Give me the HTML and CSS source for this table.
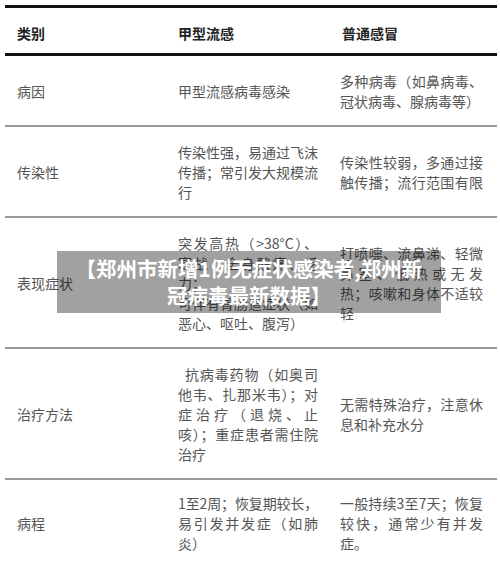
FILE: index.html
```html
<!DOCTYPE html>
<html lang="zh">
<head>
<meta charset="utf-8">
<title>甲型流感与普通感冒</title>
<link rel="stylesheet" href="styles.css">
</head>
<body>
<div class="page">
  <div class="table">
    <div class="row head">
      <div class="c1">类别</div>
      <div class="c2">甲型流感</div>
      <div class="c3">普通感冒</div>
    </div>
    <div class="row r1">
      <div class="c1">病因</div>
      <div class="c2"><div>甲型流感病毒感染</div></div>
      <div class="c3"><div class="j">多种病毒（如鼻病毒、</div><div>冠状病毒、腺病毒等）</div></div>
    </div>
    <div class="row r2">
      <div class="c1">传染性</div>
      <div class="c2"><div class="j">传染性强，易通过飞沫</div><div class="j">传播；常引发大规模流</div><div>行</div></div>
      <div class="c3"><div class="j">传染性较弱，多通过接</div><div class="j">触传播；流行范围有限</div></div>
    </div>
    <div class="row r3">
      <div class="c1">表现症状</div>
      <div class="c2"><div class="j">突发高热（&gt;38°C）、</div><div class="j">寒战、全身酸痛、乏</div><div>力；</div><div class="j">可伴有胃肠道症状（如</div><div>恶心、呕吐、腹泻）</div></div>
      <div class="c3"><div class="j">打喷嚏、流鼻涕、轻微</div><div class="j">鼻塞、低热或无发</div><div class="j">热；咳嗽和身体不适较</div><div>轻</div></div>
    </div>
    <div class="row r4">
      <div class="c1">治疗方法</div>
      <div class="c2"><div class="j ind">抗病毒药物（如奥司</div><div class="j">他韦、扎那米韦）；对</div><div class="j">症治疗（退烧、止</div><div class="j">咳）；重症患者需住院</div><div>治疗</div></div>
      <div class="c3"><div class="j">无需特殊治疗，注意休</div><div>息和补充水分</div></div>
    </div>
    <div class="row r5">
      <div class="c1">病程</div>
      <div class="c2"><div class="j tight">1至2周；恢复期较长，</div><div class="j">易引发并发症（如肺</div><div>炎）</div></div>
      <div class="c3"><div class="j">一般持续3至7天；恢复</div><div class="j">较快，通常少有并发</div><div>症。</div></div>
    </div>
  </div>
  <div class="banner">【郑州市新增1例无症状感染者,郑州新<br>冠病毒最新数据】</div>
</div>
</body>
</html>
```
FILE: styles.css
```css
html, body {
  margin: 0;
  padding: 0;
  background: #fff;
}
body {
  font-family: "Noto Sans CJK SC", "Noto Sans", sans-serif;
  font-size: 14px;
  line-height: 20px;
  color: #555;
}
.page {
  position: relative;
  width: 500px;
  height: 566px;
  overflow: hidden;
}
.table {
  margin-left: 5px;
  width: 492px;
  border-top: 3px solid #111;
  margin-top: 5px;
}
.row {
  display: grid;
  grid-template-columns: 161px 162px 169px;
  align-items: center;
  border-bottom: 2px solid #9a9a9a;
  padding: 15px 0 14px;
}
.row > div {
  padding-left: 12px;
}
.row .c2 {
  padding-right: 10px;
}
.row .c3 {
  padding-right: 14px;
}
.row .c2 > div,
.row .c3 > div {
  white-space: nowrap;
}
.head {
  padding: 15px 0 10px;
  border-bottom: 3px solid #111;
  font-weight: bold;
  color: #222;
}
.head .c3 {
  padding-left: 14px;
}
.r5 {
  padding: 13px 0 13px;
  border-bottom: 3px solid #111;
}
.j {
  text-align: justify;
  text-align-last: justify;
}
.tight {
  letter-spacing: -0.25px;
}
.ind {
  padding-left: 7px;
}
.banner {
  position: absolute;
  left: 57px;
  top: 251px;
  width: 384px;
  height: 62px;
  box-sizing: border-box;
  padding-top: 4px;
  background: rgba(0, 0, 0, 0.37);
  color: #fff;
  font-weight: bold;
  font-size: 20.5px;
  line-height: 27px;
  text-align: center;
  white-space: nowrap;
}
```
